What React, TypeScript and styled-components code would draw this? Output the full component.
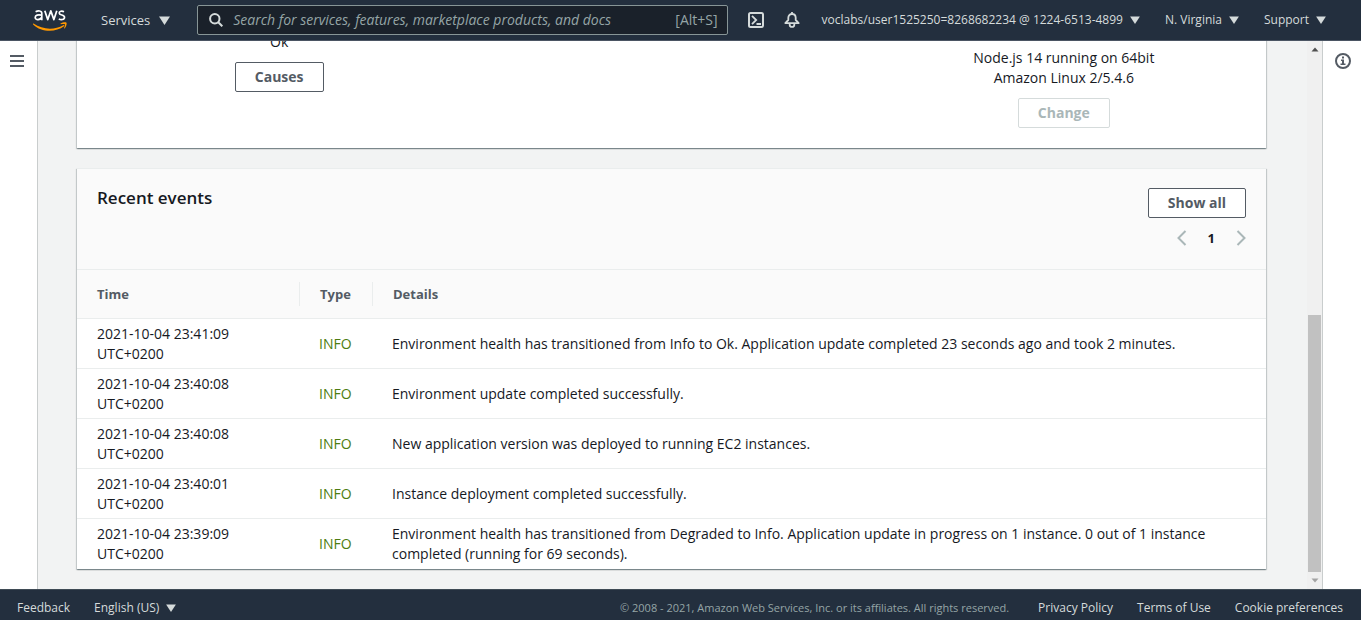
import React from "react";
import styled, { createGlobalStyle } from "styled-components";

const GlobalStyle = createGlobalStyle`
  * { box-sizing: border-box; }
  body {
    margin: 0;
    font-family: "Open Sans", "Noto Sans", sans-serif;
    font-size: 14px;
    line-height: 20px;
    color: #16191f;
    background: #f2f3f3;
  }
  button, input { font: inherit; color: inherit; }
`;

const Shell = styled.div`
  display: flex;
  flex-direction: column;
  height: 100vh;
`;

const TopBar = styled.header`
  display: flex;
  align-items: center;
  flex: none;
  height: 41px;
  padding: 0 35px 0 33px;
  background: #232f3e;
  border-bottom: 1px solid #4b5563;
  color: #d5dbdb;
`;

const LogoLink = styled.a`
  display: flex;
  margin-right: 34px;
`;

const NavButton = styled.button<{ $small?: boolean }>`
  display: flex;
  align-items: center;
  flex: none;
  gap: ${(p) => (p.$small ? 7 : 9)}px;
  padding: 0;
  border: 0;
  background: none;
  white-space: nowrap;
  font-size: ${(p) => (p.$small ? 12 : 13)}px;
  font-weight: 500;
`;

const SearchBox = styled.label`
  display: flex;
  align-items: center;
  flex: 1;
  gap: 10px;
  height: 30px;
  margin: 0 20px 0 27px;
  padding: 0 9px 0 11px;
  background: #1a212a;
  border: 1px solid #879596;
  border-radius: 2px;
  color: #95a5a6;
`;

const SearchInput = styled.input`
  flex: 1;
  min-width: 0;
  padding: 0;
  border: 0;
  outline: 0;
  background: none;
  &::placeholder { color: #95a5a6; font-style: italic; opacity: 1; }
`;

const IconButton = styled.button`
  display: flex;
  flex: none;
  padding: 0;
  border: 0;
  background: none;
`;

const TopActions = styled.div`
  display: flex;
  gap: 20px;
  margin-right: 22px;
`;

const AccountNav = styled.nav`
  display: flex;
  gap: 25px;
`;

const Body = styled.div`
  display: flex;
  flex: 1;
  min-height: 0;
`;

const Rail = styled.aside<{ $side: "left" | "right" }>`
  display: flex;
  flex: none;
  justify-content: center;
  align-items: flex-start;
  width: ${(p) => (p.$side === "left" ? 38 : 39)}px;
  padding-top: ${(p) => (p.$side === "left" ? 14 : 12)}px;
  padding-right: ${(p) => (p.$side === "left" ? 4 : 0)}px;
  padding-left: ${(p) => (p.$side === "right" ? 2 : 0)}px;
  background: #fff;
  border: 0 solid #c9cdcd;
  border-right-width: ${(p) => (p.$side === "left" ? 1 : 0)}px;
  border-left-width: ${(p) => (p.$side === "right" ? 1 : 0)}px;
  color: #545b64;
`;

const Main = styled.main`
  display: flex;
  flex: 1;
  flex-direction: column;
  justify-content: flex-end;
  gap: 20px;
  min-width: 0;
  padding: 0 41px 20px 39px;
  overflow: hidden;
`;

const ScrollTrack = styled.div`
  display: flex;
  flex: none;
  flex-direction: column;
  justify-content: space-between;
  align-items: center;
  width: 15px;
  padding: 6px 0;
  background: #f0f0f0;
`;

const ScrollThumb = styled.div`
  width: 13px;
  height: 257px;
  margin: auto 0 6px;
  background: #c1c1c1;
`;

const Card = styled.section`
  flex: none;
  background: #fff;
  border-top: 1px solid #eaeded;
  box-shadow: 0 1px 1px 0 rgba(0, 28, 36, 0.3), 1px 1px 1px 0 rgba(0, 28, 36, 0.15),
    -1px 1px 1px 0 rgba(0, 28, 36, 0.15);
`;

const Overview = styled.div`
  display: grid;
  grid-template-columns: repeat(3, 1fr);
  gap: 28px;
  padding: 20px;
`;

const OverviewColumn = styled.div<{ $lowered?: boolean }>`
  display: flex;
  flex-direction: column;
  align-items: center;
  gap: 10px;
  padding-top: ${(p) => (p.$lowered ? 16 : 0)}px;
  text-align: center;
`;

const PlatformText = styled.p`
  max-width: 200px;
  margin: 0;
`;

const ActionButton = styled.button`
  height: 30px;
  padding: 0 19px;
  border: 1px solid #545b64;
  border-radius: 2px;
  background: #fff;
  color: #545b64;
  font-weight: 700;
  &:disabled { border-color: #d5dbdb; color: #aab7b8; }
`;

const CardHeader = styled.div`
  display: flex;
  justify-content: space-between;
  align-items: flex-start;
  height: 101px;
  padding: 19px 20px;
  background: #fafafa;
  border-bottom: 1px solid #eaeded;
`;

const Title = styled.h2`
  margin: 0;
  font-size: 17px;
  line-height: 20px;
  font-weight: 600;
`;

const HeaderActions = styled.div`
  display: flex;
  flex-direction: column;
  align-items: flex-end;
  gap: 10px;
`;

const Pager = styled.nav`
  display: flex;
  align-items: center;
  gap: 21px;
  font-size: 13px;
  font-weight: 700;
  color: #16191f;
`;

const Table = styled.table`
  width: 100%;
  table-layout: fixed;
  border-collapse: separate;
  border-spacing: 0;
`;

const HeadCell = styled.th<{ $width?: number }>`
  width: ${(p) => (p.$width ? `${p.$width}px` : "auto")};
  height: 49px;
  padding: 0;
  background: #fafafa;
  border-bottom: 1px solid #eaeded;
  color: #545b64;
  text-align: left;
  font-size: 13px;
  font-weight: 700;
  span {
    display: block;
    padding: 2px 20px;
    border-right: ${(p) => (p.$width ? "1px solid #eaeded" : "0")};
  }
`;

const Cell = styled.td<{ $info?: boolean }>`
  height: 50px;
  padding: 5px 20px 4px;
  border-bottom: 1px solid #eaeded;
  color: ${(p) => (p.$info ? "#4c7c10" : "#16191f")};
  & + & { padding-left: 19px; }
  tr:last-child > & { border-bottom-color: transparent; }
`;

const TimeText = styled.time`
  display: block;
  max-width: 150px;
`;

const Footer = styled.footer`
  display: flex;
  align-items: center;
  flex: none;
  gap: 24px;
  height: 31px;
  padding: 6px 18px 0 17px;
  background: #232f3e;
  border-top: 1px solid #3f4b55;
  color: #d5dbdb;
  font-size: 12px;
`;

const Copyright = styled.small`
  margin-left: auto;
  margin-right: 5px;
  color: #95a5a6;
  font-size: 11px;
`;

const FooterLink = styled.a`
  color: inherit;
  text-decoration: none;
  font-weight: 500;
`;

const Caret = ({ size = 11 }: { size?: number }) => (
  <svg width={size} height={size - 2} viewBox="0 0 11 9" aria-hidden="true">
    <path d="M0 .5h11L5.500 9z" fill="#d5dbdb" />
  </svg>
);

const AwsLogo = () => (
  <svg width="34" height="22" viewBox="0 0 34 22" role="img" aria-label="aws">
    <g fill="none" stroke="#fff" strokeWidth="1.700" strokeLinejoin="round">
      <path d="M2.600 2.800C5 1.500 8.800 1.400 8.800 4.600V11.300M8.800 6.200C5 5.400 2.200 6 2.200 8.500c0 3 5.300 2.700 6.600-.3" />
      <path d="M11.800 1.700l2.900 8.900 3.100-8.700 3.100 8.700 2.900-8.900" />
      <path d="M31 2.700c-2-1-4.800-.7-4.800 1.300 0 2.600 5.300 1.500 5.300 4.200 0 2.700-3.600 2.800-5.700 1.700" />
    </g>
    <path d="M.5 14.600c9 6.200 21 6.700 29.800 1.600.8-.4 1.400.5.700 1.100-8.700 6.600-23 5.900-30.900-1.900-.5-.5-.1-1 .4-.8z" fill="#f90" />
    <path d="M27.500 14.600c2-1.500 5.500-1.500 6-.9.500.8-.2 4.200-1.900 5.700-.4.300-.7.100-.5-.3.400-1.100 1.200-3.200.8-3.800-.4-.5-2.800-.3-3.900-.1-.5 0-.8-.3-.5-.6z" fill="#f90" />
  </svg>
);

const SearchIcon = () => (
  <svg width="14" height="14" viewBox="0 0 14 14" fill="none" stroke="#d5dbdb" strokeWidth="2" aria-hidden="true">
    <circle cx="5.800" cy="5.800" r="4.700" />
    <path d="M9 9l4.300 4.300" />
  </svg>
);

const TerminalIcon = () => (
  <svg width="16" height="16" viewBox="0 0 16 16" fill="none" stroke="#d5dbdb" strokeWidth="2" aria-hidden="true">
    <rect x="1" y="1" width="14" height="14" rx="1.500" />
    <path d="M4 3.800l4.200 4.200L4 12.200M8.500 12h4.500" strokeWidth="1.800" />
  </svg>
);

const BellIcon = () => (
  <svg width="16" height="16" viewBox="0 0 16 16" fill="none" stroke="#d5dbdb" strokeWidth="1.800" strokeLinejoin="round" aria-hidden="true">
    <path d="M8 0v2M1.300 11.100L4.300 8V5.800C4.300 3.500 5.800 2 8 2s3.700 1.500 3.700 3.800V8l3 3.100z" />
    <path d="M5.700 11.500v1.200c0 3 4.600 3 4.600 0v-1.200" />
  </svg>
);

const MenuIcon = () => (
  <svg width="14" height="12" viewBox="0 0 14 12" aria-hidden="true">
    <path d="M0 1h14M0 6h14M0 11h14" stroke="#545b64" strokeWidth="2" />
  </svg>
);

const InfoIcon = () => (
  <svg width="16" height="16" viewBox="0 0 16 16" fill="none" stroke="#545b64" strokeWidth="2" aria-hidden="true">
    <circle cx="8" cy="8" r="7" />
    <path d="M7 3.500h2v2H7zM6 6.500h3v4h1.500V12h-5v-1.500H7V8H6z" fill="#545b64" stroke="none" />
  </svg>
);

const Chevron = ({ next = false }: { next?: boolean }) => (
  <svg width="10" height="16" viewBox="0 0 10 16" fill="none" stroke="#aab7b8" strokeWidth="2" aria-hidden="true">
    <path d={next ? "M1.500 1l7 7-7 7" : "M8.500 1l-7 7 7 7"} />
  </svg>
);

const ScrollArrow = ({ down = false }: { down?: boolean }) => (
  <svg width="8" height="5" viewBox="0 0 8 5" aria-hidden="true">
    <path d={down ? "M.5.500h7L4 4.500z" : "M.5 4.500h7L4 .5z"} fill={down ? "#a3a3a3" : "#505050"} />
  </svg>
);

const events = [
  { time: "2021-10-04 23:41:09 UTC+0200", details: "Environment health has transitioned from Info to Ok. Application update completed 23 seconds ago and took 2 minutes." },
  { time: "2021-10-04 23:40:08 UTC+0200", details: "Environment update completed successfully." },
  { time: "2021-10-04 23:40:08 UTC+0200", details: "New application version was deployed to running EC2 instances." },
  { time: "2021-10-04 23:40:01 UTC+0200", details: "Instance deployment completed successfully." },
  { time: "2021-10-04 23:39:09 UTC+0200", details: "Environment health has transitioned from Degraded to Info. Application update in progress on 1 instance. 0 out of 1 instance completed (running for 69 seconds)." },
];

export default function App() {
  return (
    <Shell>
      <GlobalStyle />
      <TopBar>
        <LogoLink href="#" aria-label="AWS home"><AwsLogo /></LogoLink>
        <NavButton>Services <Caret /></NavButton>
        <SearchBox>
          <SearchIcon />
          <SearchInput aria-label="Search" placeholder="Search for services, features, marketplace products, and docs" />
          <span>[Alt+S]</span>
        </SearchBox>
        <TopActions>
          <IconButton aria-label="CloudShell"><TerminalIcon /></IconButton>
          <IconButton aria-label="Notifications"><BellIcon /></IconButton>
        </TopActions>
        <AccountNav>
          <NavButton $small>voclabs/user1525250=8268682234 @ 1224-6513-4899 <Caret size={10} /></NavButton>
          <NavButton $small>N. Virginia <Caret size={10} /></NavButton>
          <NavButton $small>Support <Caret size={10} /></NavButton>
        </AccountNav>
      </TopBar>
      <Body>
        <Rail $side="left"><IconButton aria-label="Open navigation"><MenuIcon /></IconButton></Rail>
        <Main>
          <Card>
            <Overview>
              <OverviewColumn>
                <span>Ok</span>
                <ActionButton>Causes</ActionButton>
              </OverviewColumn>
              <OverviewColumn />
              <OverviewColumn $lowered>
                <PlatformText>Node.js 14 running on 64bit Amazon Linux 2/5.4.6</PlatformText>
                <ActionButton disabled>Change</ActionButton>
              </OverviewColumn>
            </Overview>
          </Card>
          <Card>
            <CardHeader>
              <Title>Recent events</Title>
              <HeaderActions>
                <ActionButton>Show all</ActionButton>
                <Pager aria-label="Pagination">
                  <IconButton aria-label="Previous page"><Chevron /></IconButton>
                  <span>1</span>
                  <IconButton aria-label="Next page"><Chevron next /></IconButton>
                </Pager>
              </HeaderActions>
            </CardHeader>
            <Table>
              <thead>
                <tr>
                  <HeadCell $width={223}><span>Time</span></HeadCell>
                  <HeadCell $width={73}><span>Type</span></HeadCell>
                  <HeadCell><span>Details</span></HeadCell>
                </tr>
              </thead>
              <tbody>
                {events.map((event, index) => (
                  <tr key={index}>
                    <Cell><TimeText>{event.time}</TimeText></Cell>
                    <Cell $info>INFO</Cell>
                    <Cell>{event.details}</Cell>
                  </tr>
                ))}
              </tbody>
            </Table>
          </Card>
        </Main>
        <ScrollTrack aria-hidden="true">
          <ScrollArrow />
          <ScrollThumb />
          <ScrollArrow down />
        </ScrollTrack>
        <Rail $side="right"><IconButton aria-label="Info"><InfoIcon /></IconButton></Rail>
      </Body>
      <Footer>
        <FooterLink href="#">Feedback</FooterLink>
        <NavButton $small>English (US) <Caret size={10} /></NavButton>
        <Copyright>© 2008 - 2021, Amazon Web Services, Inc. or its affiliates. All rights reserved.</Copyright>
        <FooterLink href="#">Privacy Policy</FooterLink>
        <FooterLink href="#">Terms of Use</FooterLink>
        <FooterLink href="#">Cookie preferences</FooterLink>
      </Footer>
    </Shell>
  );
}
